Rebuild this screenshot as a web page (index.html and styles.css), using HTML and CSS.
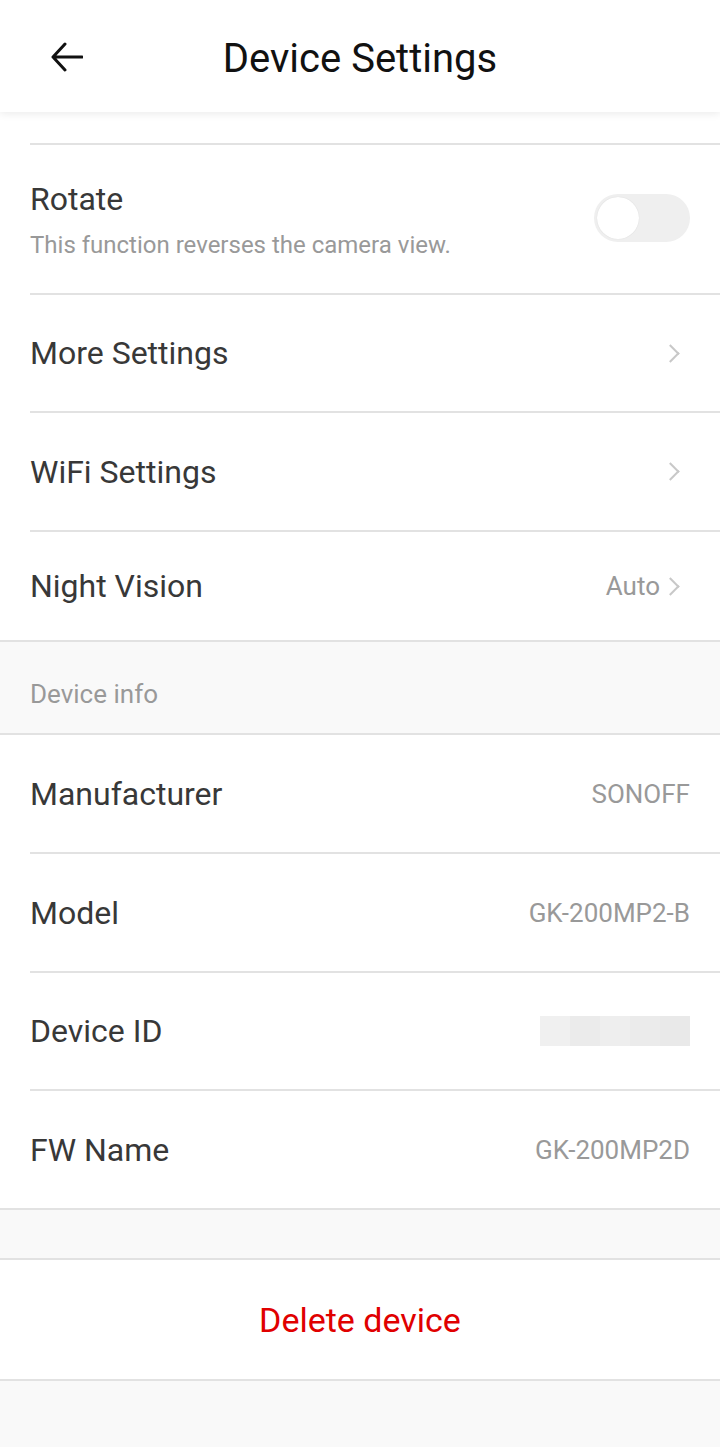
FILE: index.html
```html
<!DOCTYPE html>
<html lang="en">
<head>
  <meta charset="UTF-8">
  <meta name="viewport" content="width=device-width, initial-scale=1.0">
  <title>Device Settings</title>
  <link rel="stylesheet" href="styles.css">
</head>
<body>
  <header class="topbar">
    <button class="back" type="button" aria-label="Back">
      <svg width="32" height="32" viewBox="0 0 32 32">
        <path d="M14 3 L2 16 L14 29 M2 16 H31" fill="none" stroke="#111" stroke-width="3" stroke-linecap="round" stroke-linejoin="round"/>
      </svg>
    </button>
    <h1>Device Settings</h1>
  </header>

  <div class="page">
    <div class="spacer"></div>

    <div class="group">
      <div class="row row-top rotate">
        <div class="label-block">
          <div class="label">Rotate</div>
          <div class="hint">This function reverses the camera view.</div>
        </div>
        <div class="toggle"><span class="knob"></span></div>
      </div>
      <div class="row more">
        <span class="label">More Settings</span>
        <span class="chev"></span>
      </div>
      <div class="row">
        <span class="label">WiFi Settings</span>
        <span class="chev"></span>
      </div>
      <div class="row short">
        <span class="label">Night Vision</span>
        <span class="value">Auto<span class="chev"></span></span>
      </div>
    </div>

    <div class="section-title">Device info</div>

    <div class="group">
      <div class="row">
        <span class="label">Manufacturer</span>
        <span class="value">SONOFF</span>
      </div>
      <div class="row">
        <span class="label">Model</span>
        <span class="value">GK-200MP2-B</span>
      </div>
      <div class="row more">
        <span class="label">Device ID</span>
        <span class="masked">
          <i style="background:#f0f0f0"></i><i style="background:#ebebeb"></i><i style="background:#eeeeee"></i><i style="background:#ebebeb"></i><i style="background:#e9e9e9"></i>
        </span>
      </div>
      <div class="row">
        <span class="label">FW Name</span>
        <span class="value">GK-200MP2D</span>
      </div>
    </div>

    <div class="gap"></div>

    <div class="danger">Delete device</div>
  </div>
</body>
</html>
```

FILE: styles.css
```css
body {
  margin: 0;
  font-family: Roboto, "Noto Sans", sans-serif;
  background-color: #f9f9f9;
  color: #383838;
}
.topbar {
  height: 112px;
  box-sizing: border-box;
  padding-top: 5px;
  background: #fff;
  display: flex;
  align-items: center;
  justify-content: center;
  position: relative;
  box-shadow: 0 2px 8px rgba(0, 0, 0, 0.08);
  z-index: 1;
}
.topbar h1 {
  margin: 0;
  font-size: 40px;
  font-weight: 400;
  color: #111;
}
.back {
  position: absolute;
  left: 51px;
  top: 41px;
  padding: 0;
  border: none;
  background: none;
  width: 32px;
  height: 32px;
}
.page {
  background: #f9f9f9;
}
.spacer {
  height: 31px;
  background: #fff;
}
.group {
  background: #fff;
  padding-left: 30px;
  border-bottom: 2px solid #e2e2e2;
}
.row {
  display: flex;
  align-items: center;
  justify-content: space-between;
  height: 117px;
  padding-right: 30px;
  border-bottom: 2px solid #e2e2e2;
}
.row:last-child {
  border-bottom: none;
}
.row-top {
  border-top: 2px solid #e2e2e2;
}
.rotate {
  height: 148px;
}
.more {
  height: 116px;
}
.short {
  height: 108px;
}
.label {
  font-size: 32px;
  color: #383838;
}
.label-block .label {
  margin-bottom: 13px;
}
.hint {
  font-size: 24px;
  color: #999;
}
.value {
  font-size: 26px;
  color: #999;
  display: flex;
  align-items: center;
}
.chev {
  display: inline-block;
  width: 11px;
  height: 11px;
  border-top: 2px solid #c8c8c8;
  border-right: 2px solid #c8c8c8;
  transform: rotate(45deg);
  margin-right: 13px;
}
.value .chev {
  margin-left: 4px;
}
.toggle {
  width: 96px;
  height: 48px;
  border-radius: 24px;
  background: #efefef;
  position: relative;
  margin-bottom: 3px;
}
.knob {
  position: absolute;
  left: 3px;
  top: 3px;
  width: 42px;
  height: 42px;
  border-radius: 50%;
  background: #fff;
  box-shadow: 0 0 1px rgba(0, 0, 0, 0.15);
}
.section-title {
  height: 93px;
  box-sizing: border-box;
  padding-top: 12px;
  display: flex;
  align-items: center;
  padding-left: 30px;
  font-size: 26px;
  color: #999;
  border-bottom: 2px solid #e2e2e2;
}
.masked {
  display: flex;
  height: 30px;
}
.masked i {
  width: 30px;
  height: 30px;
}
.gap {
  height: 48px;
  border-bottom: 2px solid #e2e2e2;
}
.danger {
  height: 121px;
  box-sizing: border-box;
  background: #fff;
  display: flex;
  align-items: center;
  justify-content: center;
  font-size: 34px;
  color: #e00000;
  border-bottom: 2px solid #e2e2e2;
}
```
